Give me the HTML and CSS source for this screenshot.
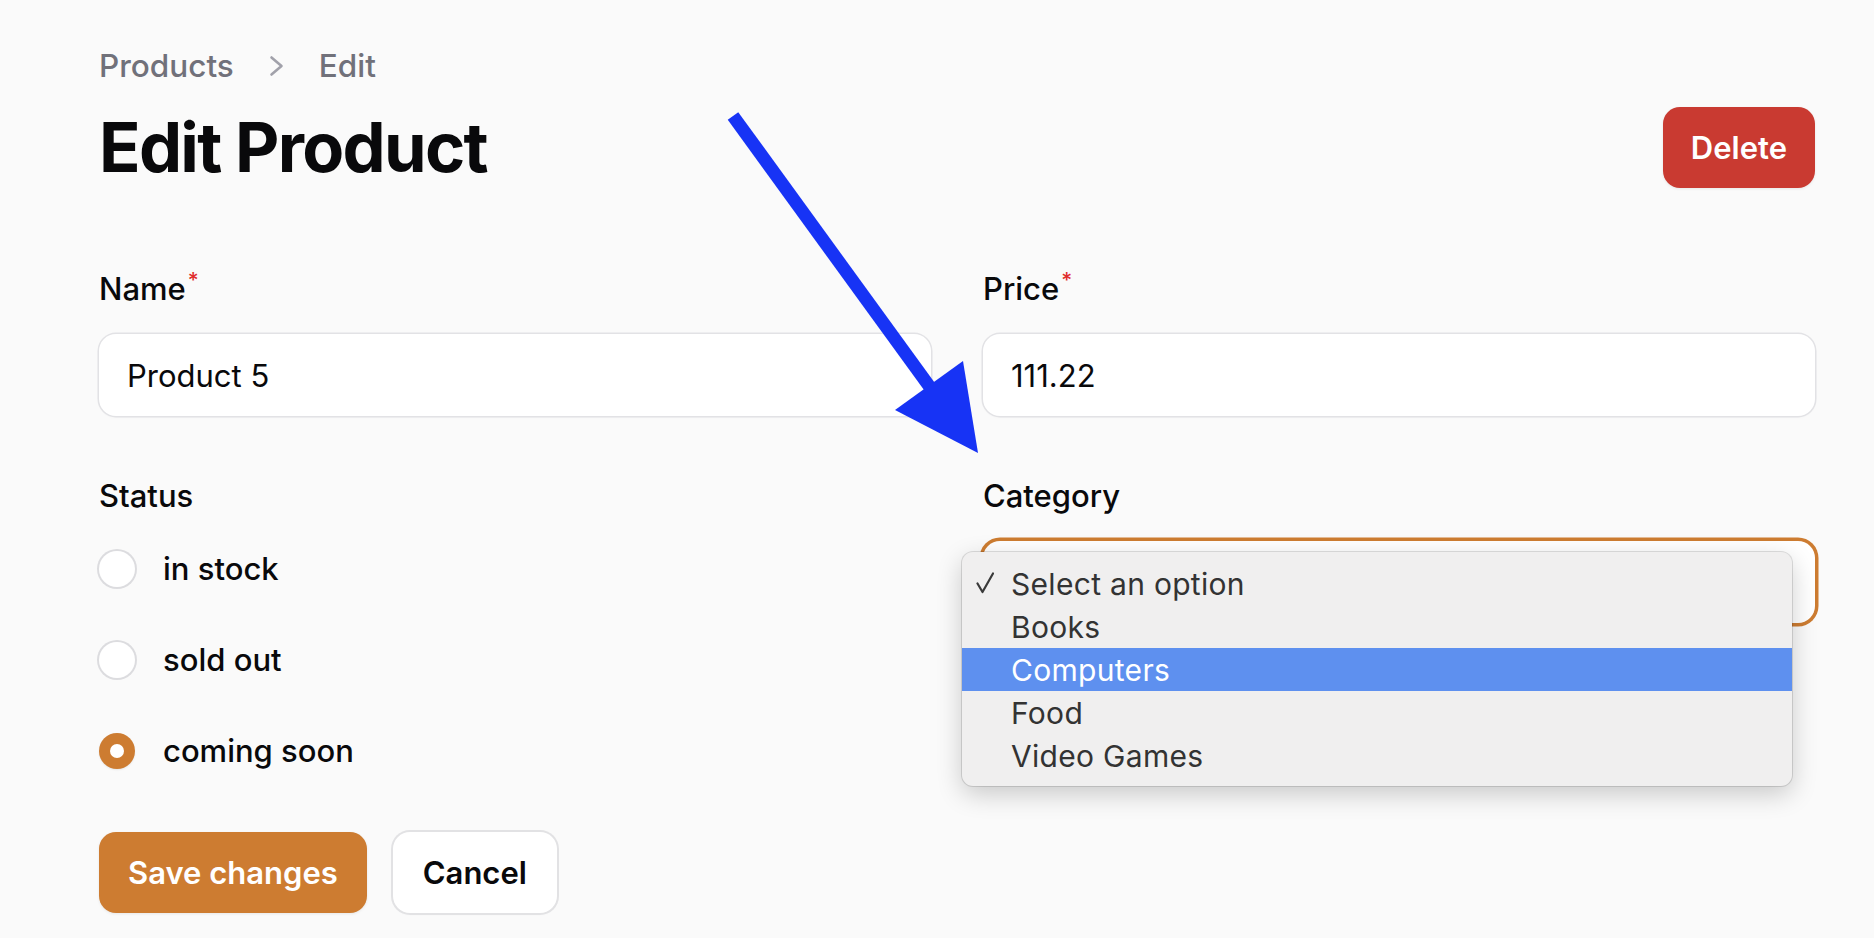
FILE: index.html
```html
<!DOCTYPE html>
<html lang="en">
<head>
<meta charset="utf-8">
<title>Edit Product</title>
<link rel="stylesheet" href="styles.css">
</head>
<body>
<div class="page">
  <nav class="breadcrumbs">
    <span class="crumb">Products</span>
    <svg class="crumb-sep" viewBox="0 0 15 22" width="15" height="22"><path d="M2.5 2.5 L12.5 11 L2.5 19.5" fill="none" stroke="#a1a1aa" stroke-width="2.6" stroke-linecap="round" stroke-linejoin="round"/></svg>
    <span class="crumb">Edit</span>
  </nav>

  <header class="header">
    <h1 class="title">Edit Product</h1>
    <button class="btn btn-danger" type="button">Delete</button>
  </header>

  <form class="form">
    <div class="grid">
      <div class="field">
        <label class="label">Name<span class="req">*</span></label>
        <div class="input">Product 5</div>
      </div>
      <div class="field">
        <label class="label">Price<span class="req">*</span></label>
        <div class="input">111.22</div>
      </div>
      <div class="field">
        <label class="label">Status</label>
        <div class="radios">
          <div class="radio-row"><span class="radio"></span><span class="radio-label">in stock</span></div>
          <div class="radio-row"><span class="radio"></span><span class="radio-label">sold out</span></div>
          <div class="radio-row"><span class="radio radio-on"></span><span class="radio-label">coming soon</span></div>
        </div>
      </div>
      <div class="field">
        <label class="label">Category</label>
        <div class="select-wrap">
          <div class="select"></div>
          <div class="menu">
            <div class="menu-item"><svg class="check" viewBox="0 0 18 22" width="18" height="22"><path d="M1.5 11.5 L6.5 20 L17 1.5" fill="none" stroke="#3a3a3a" stroke-width="2.2" stroke-linecap="round" stroke-linejoin="round"/></svg><span>Select an option</span></div>
            <div class="menu-item"><span>Books</span></div>
            <div class="menu-item menu-item-active"><span>Computers</span></div>
            <div class="menu-item"><span>Food</span></div>
            <div class="menu-item"><span>Video Games</span></div>
          </div>
        </div>
      </div>
    </div>
    <div class="actions">
      <button class="btn btn-primary" type="button">Save changes</button>
      <button class="btn btn-secondary" type="button">Cancel</button>
    </div>
  </form>

  <svg class="arrow" viewBox="0 0 1874 938" width="1874" height="938">
    <line x1="733" y1="116" x2="932" y2="390" stroke="#1733f5" stroke-width="13"/>
    <polygon points="895,410 963,361 978,453" fill="#1733f5"/>
  </svg>
</div>
</body>
</html>
```

FILE: styles.css
```css
* { box-sizing: border-box; }

html, body {
  margin: 0;
  padding: 0;
  background: #fafafa;
}

body {
  font-family: "Inter", "Liberation Sans", sans-serif;
  color: #09090b;
  overflow: hidden;
}

.page {
  position: relative;
  width: 1874px;
  height: 938px;
  padding: 44px 59px 0 99px;
}

.breadcrumbs {
  display: flex;
  align-items: center;
  gap: 35px;
  height: 44px;
}

.crumb {
  font-size: 31.5px;
  font-weight: 500;
  color: #71717a;
  line-height: 44px;
}

.crumb-sep { display: block; }

.header {
  margin-top: 19px;
  height: 81px;
  display: flex;
  align-items: center;
  justify-content: space-between;
}

.title {
  margin: 0;
  font-size: 68.5px;
  font-weight: 700;
  letter-spacing: -0.025em;
  line-height: 81px;
  color: #09090b;
}

.btn {
  font-family: "Inter", "Liberation Sans", sans-serif;
  font-size: 31px;
  font-weight: 600;
  height: 81px;
  padding: 0 28px;
  border: none;
  border-radius: 17px;
  cursor: pointer;
}

.btn-danger {
  background: #c93a31;
  color: #ffffff;
  box-shadow: 0 1px 3px rgba(0,0,0,0.08);
}

.btn-primary {
  background: #cd7c31;
  color: #ffffff;
  padding: 0 29px;
  box-shadow: 0 1px 3px rgba(0,0,0,0.08);
}

.btn-secondary {
  background: #ffffff;
  color: #09090b;
  padding: 0 30px;
  box-shadow: 0 0 0 2px #e2e2e4, 0 1px 3px rgba(0,0,0,0.06);
}

.form { margin-top: 71px; }

.grid {
  display: grid;
  grid-template-columns: 1fr 1fr;
  column-gap: 52px;
  row-gap: 58px;
}

.field {
  display: flex;
  flex-direction: column;
  gap: 23px;
}

.label {
  font-size: 31px;
  font-weight: 500;
  line-height: 44px;
  color: #09090b;
}

.req {
  color: #e02d2d;
  font-size: 21px;
  font-weight: 500;
  vertical-align: 12px;
  margin-left: 2px;
}

.input {
  height: 82px;
  background: #ffffff;
  border-radius: 17px;
  box-shadow: 0 0 0 1.5px #e2e2e5, 0 1px 3px rgba(0,0,0,0.05);
  padding: 0 28px;
  display: flex;
  align-items: center;
  font-size: 31px;
  color: #09090b;
}

.radios {
  margin-top: 6px;
  display: flex;
  flex-direction: column;
  gap: 47px;
}

.radio-row {
  height: 44px;
  display: flex;
  align-items: center;
  gap: 28px;
}

.radio {
  width: 36px;
  height: 36px;
  border-radius: 50%;
  background: #ffffff;
  box-shadow: 0 0 0 2px #dcdcdf, 0 1px 2px rgba(0,0,0,0.06);
  flex: none;
  display: flex;
  align-items: center;
  justify-content: center;
}

.radio-on {
  background: #cd7c31;
  box-shadow: 0 1px 2px rgba(0,0,0,0.08);
}

.radio-on::after {
  content: "";
  width: 14px;
  height: 14px;
  border-radius: 50%;
  background: #ffffff;
}

.radio-label {
  font-size: 31px;
  font-weight: 500;
  color: #09090b;
  line-height: 44px;
}

.select-wrap {
  position: relative;
}

.select {
  height: 82px;
  background: #ffffff;
  border-radius: 17px;
  box-shadow: 0 0 0 3.5px #cd7c31;
}

.menu {
  position: absolute;
  top: 11px;
  left: -21px;
  width: 830px;
  padding: 10px 0 9px;
  background: #f0efef;
  border-radius: 11px;
  box-shadow: 0 0 0 1px rgba(0,0,0,0.12), 0 8px 26px rgba(0,0,0,0.2);
}

.menu-item {
  position: relative;
  height: 43px;
  padding-left: 49px;
  display: flex;
  align-items: center;
  font-family: "Inter", "Liberation Sans", sans-serif;
  font-size: 30px;
  letter-spacing: 0.3px;
  color: #333333;
}

.menu-item-active {
  background: #5e90ef;
  color: #ffffff;
}

.check {
  position: absolute;
  left: 14px;
  top: 10px;
}

.actions {
  margin-top: 59px;
  display: flex;
  gap: 26px;
}

.arrow {
  position: absolute;
  left: 0;
  top: 0;
  pointer-events: none;
}
```
